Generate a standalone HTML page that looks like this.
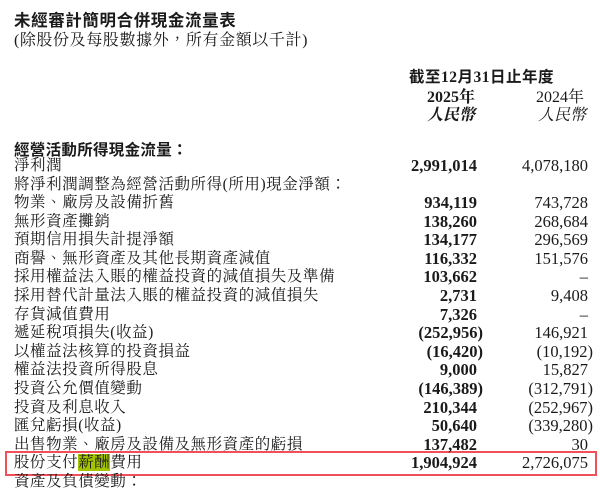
<!DOCTYPE html>
<html><head><meta charset="utf-8"><style>
html,body{margin:0;padding:0;background:#fff;}
body{width:600px;height:490px;position:relative;overflow:hidden;color:#1a1a1a;font-family:"Liberation Serif","Noto Serif CJK TC","Noto Serif CJK SC",serif;}
.t{position:absolute;left:14px;top:7px;font:bold 16.5px "Liberation Sans","Noto Sans CJK TC",sans-serif;letter-spacing:0.6px;}
.s{position:absolute;left:14px;top:27px;font-size:16px;letter-spacing:0.6px;}
.h{position:absolute;font-size:15.5px;white-space:nowrap;}
.r{position:absolute;left:0;width:600px;height:18.55px;font-size:15.5px;line-height:18.55px;white-space:nowrap;}
.r .l{position:absolute;left:14px;letter-spacing:0.55px;}
.r .a{position:absolute;right:123px;font-weight:bold;font-size:16.5px;}
.r .b{position:absolute;right:12px;font-size:16.5px;}
.box{position:absolute;left:5px;top:451px;width:588px;height:21px;border:2px solid #f0505a;}
.hl{background:#a4c400;}
</style></head><body>
<div class="t">未經審計簡明合併現金流量表</div>
<div class="s">(除股份及每股數據外，所有金額以千計)</div>
<div class="h" style="left:409px;top:65px;font-weight:bold;font-family:'Liberation Sans','Noto Sans CJK TC',sans-serif;font-size:15.5px;letter-spacing:0.5px">截至<span style="font-family:'Liberation Serif',serif">12</span>月<span style="font-family:'Liberation Serif',serif">31</span>日止年度</div>
<div class="h" style="left:427px;top:84px;font-weight:bold;font-size:16px">2025年</div>
<div class="h" style="left:536px;top:84px;font-size:16px">2024年</div>
<div class="h" style="left:427px;top:102px;font-style:italic;font-weight:bold;font-size:16px">人民幣</div>
<div class="h" style="left:538px;top:102px;font-style:italic;font-size:16px">人民幣</div>
<div class="h" style="left:14px;top:138px;font-weight:bold;font-family:'Liberation Sans','Noto Sans CJK TC',sans-serif;font-size:15.5px;letter-spacing:0.3px">經營活動所得現金流量：</div>
<div class="box"></div>
<div class="r" style="top:157px"><span class="l">淨利潤</span><span class="a">2,991,014</span><span class="b">4,078,180</span></div>
<div class="r" style="top:175.5px"><span class="l">將淨利潤調整為經營活動所得(所用)現金淨額：</span></div>
<div class="r" style="top:194px"><span class="l">物業、廠房及設備折舊</span><span class="a">934,119</span><span class="b">743,728</span></div>
<div class="r" style="top:212.6px"><span class="l">無形資產攤銷</span><span class="a">138,260</span><span class="b">268,684</span></div>
<div class="r" style="top:231.2px"><span class="l">預期信用損失計提淨額</span><span class="a">134,177</span><span class="b">296,569</span></div>
<div class="r" style="top:249.8px"><span class="l">商譽、無形資產及其他長期資產減值</span><span class="a">116,332</span><span class="b">151,576</span></div>
<div class="r" style="top:268.4px"><span class="l">採用權益法入賬的權益投資的減值損失及準備</span><span class="a">103,662</span><span class="b">–</span></div>
<div class="r" style="top:287px"><span class="l">採用替代計量法入賬的權益投資的減值損失</span><span class="a">2,731</span><span class="b">9,408</span></div>
<div class="r" style="top:305.6px"><span class="l">存貨減值費用</span><span class="a">7,326</span><span class="b">–</span></div>
<div class="r" style="top:324.2px"><span class="l">遞延稅項損失(收益)</span><span class="a" style="right:117px">(252,956)</span><span class="b">146,921</span></div>
<div class="r" style="top:342.8px"><span class="l">以權益法核算的投資損益</span><span class="a" style="right:117px">(16,420)</span><span class="b" style="right:7px">(10,192)</span></div>
<div class="r" style="top:361.4px"><span class="l">權益法投資所得股息</span><span class="a">9,000</span><span class="b">15,827</span></div>
<div class="r" style="top:380px"><span class="l">投資公允價值變動</span><span class="a" style="right:117px">(146,389)</span><span class="b" style="right:7px">(312,791)</span></div>
<div class="r" style="top:398.6px"><span class="l">投資及利息收入</span><span class="a">210,344</span><span class="b" style="right:7px">(252,967)</span></div>
<div class="r" style="top:417.2px"><span class="l">匯兌虧損(收益)</span><span class="a">50,640</span><span class="b" style="right:7px">(339,280)</span></div>
<div class="r" style="top:435.8px"><span class="l">出售物業、廠房及設備及無形資產的虧損</span><span class="a">137,482</span><span class="b">30</span></div>
<div class="r" style="top:454.4px"><span class="l">股份支付<span class="hl">薪酬</span>費用</span><span class="a">1,904,924</span><span class="b">2,726,075</span></div>
<div class="r" style="top:473px"><span class="l">資產及負債變動：</span></div>
</body></html>
